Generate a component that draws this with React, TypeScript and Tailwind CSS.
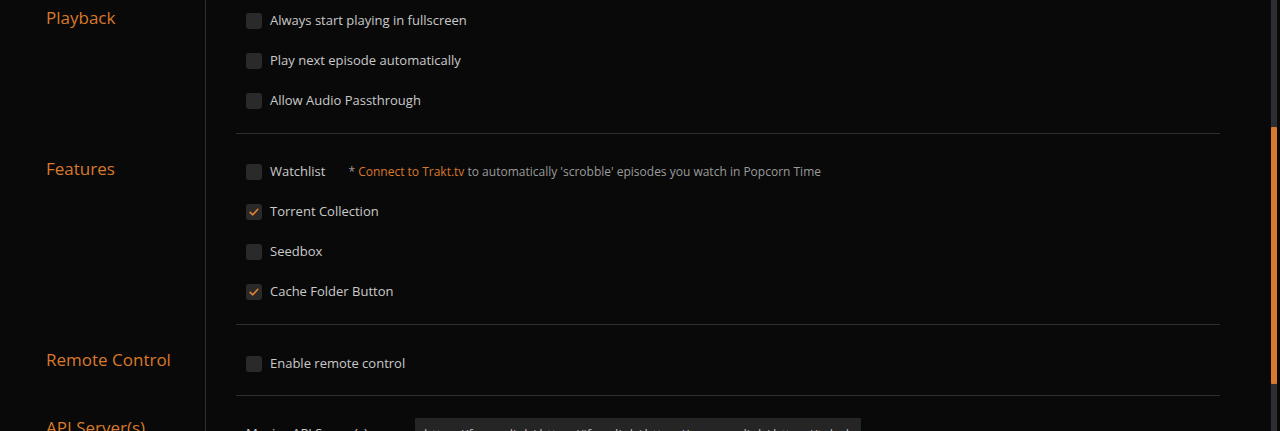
const orange = "text-[#d8792b]";

const Checkbox = ({ checked }: { checked?: boolean }) => (
  <span className="flex h-4 w-4 shrink-0 items-center justify-center rounded-[3px] bg-[#2a2a2a]">
    {checked && (
      <svg width="12" height="12" viewBox="0 0 12 12" fill="none">
        <path d="M2.2 6.3 4.8 8.8 9.8 3.3" stroke="#e07f2c" strokeWidth="1.6" strokeLinecap="round" strokeLinejoin="round" />
      </svg>
    )}
  </span>
);

const Row = ({ label, checked, children }: { label: string; checked?: boolean; children?: React.ReactNode }) => (
  <div className="flex h-10 items-center pl-[10px]">
    <Checkbox checked={checked} />
    <span className="ml-2 text-[13px] text-[#c9c9c9]">{label}</span>
    {children}
  </div>
);

const Section = ({
  title,
  labelPad,
  bodyPad,
  last,
  children,
}: {
  title: string;
  labelPad: string;
  bodyPad: string;
  last?: boolean;
  children: React.ReactNode;
}) => (
  <div className="flex">
    <div className="w-[206px] shrink-0 border-r border-[#303030] pl-[46px]">
      <h2 className={`text-[17px] leading-6 ${orange} ${labelPad}`}>{title}</h2>
    </div>
    <div className="flex-1 pl-[30px] pr-[60px]">
      <div className={`${bodyPad} ${last ? "" : "border-b border-[#2e2e2e]"}`}>{children}</div>
    </div>
  </div>
);

export default function App() {
  return (
    <div
      className="relative h-[431px] w-[1280px] overflow-hidden bg-[#090909]"
      style={{ fontFamily: '"Open Sans", "Noto Sans", sans-serif' }}
    >
      <Section title="Playback" labelPad="pt-[6px]" bodyPad="pt-[1px] pb-[12px]">
        <Row label="Always start playing in fullscreen" />
        <Row label="Play next episode automatically" />
        <Row label="Allow Audio Passthrough" />
      </Section>
      <Section title="Features" labelPad="pt-[23px]" bodyPad="pt-[18px] pb-3">
        <Row label="Watchlist">
          <span className="ml-[23px] text-[12px] text-[#9b9b9b]">
            * <span className={orange}>Connect to Trakt.tv</span> to automatically 'scrobble' episodes you watch in
            Popcorn Time
          </span>
        </Row>
        <Row label="Torrent Collection" checked />
        <Row label="Seedbox" />
        <Row label="Cache Folder Button" checked />
      </Section>
      <Section title="Remote Control" labelPad="pt-[23px]" bodyPad="pt-[19px] pb-[11px]">
        <Row label="Enable remote control" />
      </Section>
      <Section title="API Server(s)" labelPad="pt-[20px]" bodyPad="pt-[22px]" last>
        <div className="flex items-start pl-[10px]">
          <span className="w-[169px] pt-[6px] text-[13px] text-[#c9c9c9]">Movies API Server(s)</span>
          <div className="h-8 w-[446px] overflow-hidden whitespace-nowrap bg-[#252525] px-[9px] pt-[7px] text-[13px] text-[#bdbdbd]">
            https://fusme.link/,https://jfper.link/,https://popcorn.link/,https://tubuken.link/
          </div>
        </div>
      </Section>

      <div className="absolute right-[3px] top-0 h-full w-[6px] bg-[#2c2e33]">
        <div className="absolute left-0 top-[127px] h-[257px] w-full rounded-[1px] bg-[#d8792b]" />
      </div>
    </div>
  );
}
